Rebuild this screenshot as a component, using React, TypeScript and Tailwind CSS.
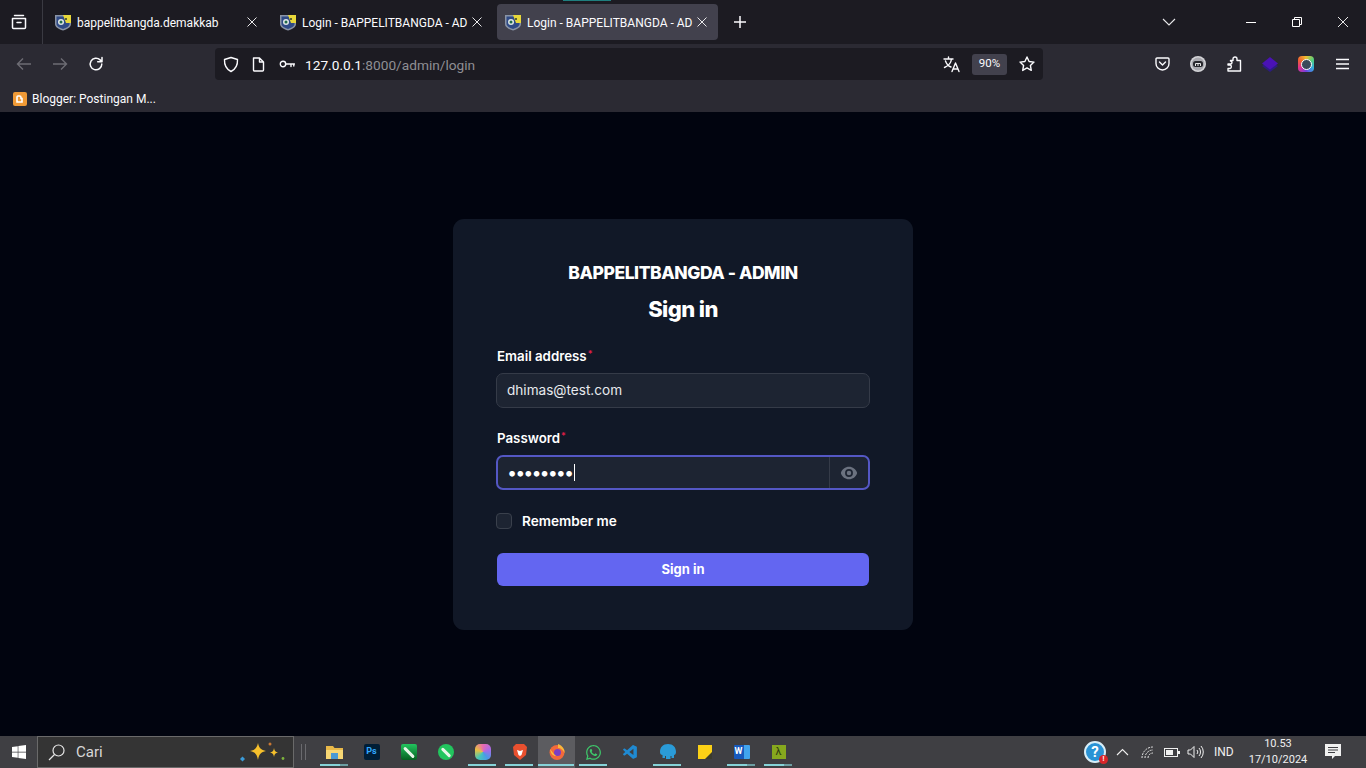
import React from "react";
import { HiEye } from "react-icons/hi2";
import { FaWindows, FaWhatsapp } from "react-icons/fa";
import { VscVscode } from "react-icons/vsc";

const uiFont = { fontFamily: 'Roboto, "Noto Sans", sans-serif' };

function Favicon() {
  return (
    <svg width="16" height="17" viewBox="0 0 16 17" className="shrink-0">
      <path d="M0 1h16v9c0 3-3 5-8 6.500C3 15 0 13 0 10z" fill="#8a94a6" />
      <path d="M1.500 2.500h13V10c0 2-3 4-6.500 5C4.500 14 1.500 12 1.500 10z" fill="#2f4a86" />
      <path d="M8 1h8v8l-5 0z" fill="#e8d83a" />
      <circle cx="6" cy="8" r="3" fill="#dfe6e6" />
      <circle cx="6" cy="8" r="1.500" fill="#1f6b4a" />
      <circle cx="11" cy="5" r="1" fill="#2d3d2a" />
    </svg>
  );
}

function Tab({ title, active }: { title: string; active?: boolean }) {
  return (
    <div className={`flex h-[36px] w-[221px] shrink-0 items-center rounded pl-[8px] pr-[10px] ${active ? "bg-[#42414d]" : ""}`}>
      <Favicon />
      <div className="ml-[6px] flex-1 whitespace-nowrap pt-[1px] text-[12px] text-[#fbfbfe]">{title}</div>
      <svg width="12" height="12" viewBox="0 0 12 12" className="shrink-0" stroke="#e8e8ea" strokeWidth="1" fill="none">
        <path d="M1.500 1.500l9 9M10.500 1.500l-9 9" />
      </svg>
    </div>
  );
}

function ToolIcon({ children }: { children: React.ReactNode }) {
  return <div className="flex h-[32px] w-[36px] shrink-0 items-center justify-center">{children}</div>;
}

const stroke = { fill: "none", stroke: "#fbfbfe", strokeWidth: 1.4, strokeLinecap: "round" as const, strokeLinejoin: "round" as const };

function TabBar() {
  return (
    <div className="relative flex h-[44px] shrink-0 items-center bg-[#1c1b22]">
      <div className="absolute left-[563px] top-0 h-[1px] w-[48px] bg-[#1f7f7f]" />
      <div className="flex h-[44px] w-[43px] shrink-0 items-center justify-center border-r border-[#3a3a42] pr-[4px]">
        <svg width="16" height="16" viewBox="0 0 16 16" {...stroke}>
          <path d="M3.500 1.500h9M1.500 4.500h13v9a1 1 0 0 1-1 1h-11a1 1 0 0 1-1-1zM6 8.500h4" strokeWidth="1.500" />
        </svg>
      </div>
      <div className="ml-[4px] flex items-center gap-[4px]">
        <Tab title="bappelitbangda.demakkab" />
        <Tab title="Login - BAPPELITBANGDA - AD" />
        <Tab title="Login - BAPPELITBANGDA - AD" active />
      </div>
      <div className="ml-[15px] flex w-[16px] items-center justify-center">
        <svg width="14" height="14" viewBox="0 0 14 14" stroke="#fbfbfe" strokeWidth="1.500" fill="none">
          <path d="M7 1v12M1 7h12" />
        </svg>
      </div>
      <div className="ml-[414px] flex w-[16px] items-center justify-center">
        <svg width="14" height="8" viewBox="0 0 14 8" stroke="#e8e8ea" strokeWidth="1.100" fill="none">
          <path d="M1 1l6 6 6-6" />
        </svg>
      </div>
      <div className="ml-[52px] flex h-full items-center">
        <div className="flex w-[46px] justify-center">
          <div className="h-[1px] w-[10px] bg-white" />
        </div>
        <div className="flex w-[46px] justify-center">
          <svg width="10" height="10" viewBox="0 0 10 10" stroke="#fff" strokeWidth="1" fill="none">
            <path d="M.500 2.500h7v7h-7zM2.500 2.500v-2h7v7h-2" />
          </svg>
        </div>
        <div className="flex w-[46px] justify-center">
          <svg width="10" height="10" viewBox="0 0 10 10" stroke="#fff" strokeWidth="0.900" fill="none">
            <path d="M0 0l10 10M10 0L0 10" />
          </svg>
        </div>
      </div>
    </div>
  );
}

function NavBar() {
  return (
    <div className="flex h-[36px] shrink-0 items-start bg-[#2b2a33] pt-[4px]">
      <div className="flex w-[215px] shrink-0 pl-[6px]">
        <ToolIcon>
          <svg width="16" height="14" viewBox="0 0 16 14" fill="none" stroke="#6d6c74" strokeWidth="1.400">
            <path d="M15 7H2M7 1.500L1.500 7 7 12.500" />
          </svg>
        </ToolIcon>
        <ToolIcon>
          <svg width="16" height="14" viewBox="0 0 16 14" fill="none" stroke="#6d6c74" strokeWidth="1.400">
            <path d="M1 7h13M9 1.500L14.500 7 9 12.500" />
          </svg>
        </ToolIcon>
        <ToolIcon>
          <svg width="16" height="16" viewBox="0 0 16 16" {...stroke} strokeWidth={1.5}>
            <path d="M13.800 8a5.800 5.800 0 1 1-1.700-4.100L14 5.800M14 1.500v4.300H9.700" />
          </svg>
        </ToolIcon>
      </div>
      <div className="flex h-[32px] w-[828px] shrink-0 items-center rounded bg-[#1c1b22]">
        <div className="flex w-[90px] shrink-0 items-center pl-[8px]">
          <div className="flex w-[28px] justify-start">
            <svg width="16" height="17" viewBox="0 0 16 17" {...stroke}>
              <path d="M8 1.500l6.500 2c.3 6-1.500 9.500-6.500 12-5-2.500-6.800-6-6.500-12z" />
            </svg>
          </div>
          <div className="flex w-[28px] justify-start pl-[1px]">
            <svg width="13" height="15" viewBox="0 0 13 15" {...stroke}>
              <path d="M1.500 1h6l4 4v8a1 1 0 0 1-1 1h-8a1 1 0 0 1-1-1zM7.500 1v4h4" />
            </svg>
          </div>
          <svg width="16" height="10" viewBox="0 0 16 10" {...stroke} className="shrink-0">
            <circle cx="4" cy="5" r="2.700" />
            <path d="M6.700 5H15.500M12 5v2.500M14.800 5v2" />
          </svg>
        </div>
        <div className="flex-1 pt-[2px] text-[13.700px] text-[#fbfbfe]">
          127.0.0.1<span className="text-[#8f8f94]">:8000/admin/login</span>
        </div>
        <svg width="18" height="17" viewBox="0 0 18 17" {...stroke} strokeWidth={1.4} className="shrink-0">
          <path d="M1 3h9M5.500 1v2M8.500 3C8 7 5 10 1.500 11.500M2.500 5c1 3 3 5 5.500 6M9 15.500L12.500 7l3.500 8.500M10.300 13h4.500" />
        </svg>
        <div className="ml-[11px] flex h-[21px] w-[35px] shrink-0 items-center justify-center rounded-[3px] bg-[#42414d] text-[11.500px] text-[#fbfbfe]">
          90%
        </div>
        <div className="ml-[12px] mr-[8px] shrink-0">
          <svg width="16" height="16" viewBox="0 0 16 16" {...stroke} className="block">
            <path d="M8 1l2.100 4.500 4.900.6-3.600 3.400.9 4.900L8 11.900l-4.300 2.500.9-4.900L1 6.100l4.900-.6z" />
          </svg>
        </div>
      </div>
      <div className="ml-[101px] flex">
        <ToolIcon>
          <svg width="15" height="14" viewBox="0 0 15 14" {...stroke}>
            <path d="M1 2a1 1 0 0 1 1-1h11a1 1 0 0 1 1 1v4.500a6.500 6.500 0 0 1-13 0zM4.500 5l3 3 3-3" />
          </svg>
        </ToolIcon>
        <ToolIcon>
          <svg width="16" height="16" viewBox="0 0 16 16">
            <circle cx="8" cy="8" r="8" fill="#d4d4d8" />
            <circle cx="8" cy="8" r="6.500" fill="#a8a8ae" />
            <rect x="3" y="5" width="10" height="6" rx="2.500" fill="#26262c" />
            <path d="M5.500 10V7.500h5V10M8 7.500V10" stroke="#e8e8e8" strokeWidth="1" fill="none" />
          </svg>
        </ToolIcon>
        <ToolIcon>
          <svg width="15" height="16" viewBox="0 0 15 16" {...stroke}>
            <path d="M1 8h2.500a1.500 1.500 0 0 0 0-3V4.500h2.500V3a2 2 0 0 1 4 0v1.500h3.500V15H1v-2.500h2a1.800 1.800 0 0 0 0-3.500H1z" />
          </svg>
        </ToolIcon>
        <ToolIcon>
          <svg width="16" height="16" viewBox="0 0 16 16">
            <path d="M0 10l8-5 8 5-8 6z" fill="#2c1c80" />
            <path d="M0 7.500l8-6.500 8 6.500-8 6z" fill="#4a12b5" />
          </svg>
        </ToolIcon>
        <ToolIcon>
          <div className="flex h-[16px] w-[16px] items-center justify-center rounded-[4px] bg-[conic-gradient(#f0c030,#50d080,#30b0e0,#7040e0,#e03090,#f06030,#f0c030)]">
            <div className="flex h-[11px] w-[11px] items-center justify-center rounded-full border border-white bg-[#3a4a5a]" />
          </div>
        </ToolIcon>
        <ToolIcon>
          <svg width="13" height="12" viewBox="0 0 13 12" stroke="#fbfbfe" strokeWidth="1.300" fill="none">
            <path d="M0 1.500h13M0 6h13M0 10.500h13" />
          </svg>
        </ToolIcon>
      </div>
    </div>
  );
}

function BookmarkBar() {
  return (
    <div className="flex h-[32px] shrink-0 items-center bg-[#2b2a33] pl-[13px] pt-[5px]">
      <div className="flex h-[14px] w-[14px] items-center justify-center rounded-[2px] bg-[#f09a36]">
        <svg width="8" height="8" viewBox="0 0 8 8" fill="none" stroke="#fff" strokeWidth="1.600">
          <path d="M1 7V2a1 1 0 0 1 1-1h1.500a1.500 1.500 0 0 1 1.500 1.500V3.500h1V7z" />
        </svg>
      </div>
      <div className="ml-[5px] text-[12px] text-[#fbfbfe]">Blogger: Postingan M...</div>
    </div>
  );
}

const cardFont = { fontFamily: 'Inter, "Noto Sans", sans-serif' };

function LoginCard() {
  return (
    <div className="flex h-[411px] w-[460px] flex-col rounded-[11px] bg-[#111827] px-[43px] pt-[43px] text-white" style={cardFont}>
      <div className="text-center text-[17.500px] font-extrabold leading-[22px] tracking-[-0.45px]">BAPPELITBANGDA - ADMIN</div>
      <div className="mt-[9px] text-center text-[22px] font-extrabold leading-[32px] tracking-[-0.6px]">Sign in</div>

      <div className="mt-[22px] pl-[1px] text-[13.300px] font-semibold leading-[18px]">
        Email address<sup className="ml-[1px] text-[9px] font-semibold text-[#e11d48]">*</sup>
      </div>
      <div className="mt-[8px] flex h-[35px] items-center rounded-[7px] border border-[#353b48] bg-[#1d2432] px-[10px] text-[13.600px] text-[#e8eaee]">
        dhimas@test.com
      </div>

      <div className="mt-[21px] pl-[1px] text-[13.300px] font-semibold leading-[18px]">
        Password<sup className="ml-[1px] text-[9px] font-semibold text-[#e11d48]">*</sup>
      </div>
      <div className="mt-[8px] flex h-[35px] items-center rounded-[7px] border-2 border-[#5457c4] bg-[#1d2432]">
        <div className="flex flex-1 items-center pl-[9px] text-white">
          <span className="text-[18px] leading-[17px] tracking-[-2px]">••••••••</span>
          <span className="ml-[2px] h-[17px] w-[1px] bg-white" />
        </div>
        <div className="flex h-full w-[39px] items-center justify-center border-l border-[#353b48]">
          <HiEye className="h-[18px] w-[18px] text-[#6b7280]" />
        </div>
      </div>

      <div className="mt-[21px] flex items-center">
        <div className="h-[16px] w-[16px] rounded-[4px] border border-[#3a404c] bg-[#1d2432]" />
        <div className="ml-[10px] text-[13.600px] font-semibold">Remember me</div>
      </div>

      <div className="mx-[1px] mt-[22px] flex h-[33px] items-center justify-center rounded-[6px] bg-[#6366f1] text-[13px] font-bold">
        Sign in
      </div>
    </div>
  );
}

function AppIcon({ children, active, bar }: { children: React.ReactNode; active?: boolean; bar?: "full" | "split" | "none" }) {
  return (
    <div className={`relative flex h-[32px] w-[37px] shrink-0 items-center justify-center ${active ? "bg-[#5c5c60]" : ""}`}>
      {children}
      {bar !== "none" && (
        <div className={`absolute bottom-[2px] flex h-[2px] ${active ? "left-0 w-[36px]" : "left-[4px] w-[28px]"}`}>
          <div className={`h-full bg-[#86d3d8] ${bar === "split" ? "w-[20px]" : "w-full"}`} />
          {bar === "split" && <div className="h-full w-[8px] bg-[#6c9ea2]" />}
        </div>
      )}
    </div>
  );
}

function Taskbar() {
  return (
    <div className="flex h-[32px] shrink-0 items-center bg-[#3f3f43]" style={uiFont}>
      <div className="flex h-full w-[37px] shrink-0 items-center justify-center">
        <FaWindows className="h-[16px] w-[16px] text-white" />
      </div>
      <div className="flex h-[32px] w-[257px] shrink-0 items-center border border-[#6a6a6a] bg-[#343434] pl-[10px]">
        <svg width="17" height="17" viewBox="0 0 17 17" fill="none" stroke="#e6e6e6" strokeWidth="1.200" className="shrink-0">
          <circle cx="10.500" cy="6.500" r="5.500" />
          <path d="M6.500 10.500L1 16" />
        </svg>
        <div className="ml-[11px] flex-1 text-[15px] text-[#d8d8d8]">Cari</div>
        <svg width="48" height="24" viewBox="0 0 48 24" className="mr-[7px] shrink-0">
          <path d="M2 19l2.500-2.500L7 19l-2.500 2.500z" fill="#3b9bd8" />
          <path d="M20 3c1 5 3 7 8 8-5 1-7 3-8 9-1-6-3-8-8-9 5-1 7-3 8-8z" fill="#f6c02c" />
          <path d="M36 8c.5 3 1.500 4 4 4.500-2.500.5-3.500 1.500-4 4.500-.5-3-1.500-4-4-4.500 2.500-.5 3.500-1.500 4-4.500z" fill="#f6c02c" />
          <circle cx="32" cy="4" r="1.500" fill="#c87834" />
          <circle cx="45" cy="18.500" r="1.400" fill="#7db33c" />
        </svg>
      </div>
      <div className="ml-[7px] flex h-[16px] w-[5px] shrink-0 justify-between">
        <div className="w-[1px] bg-[#6a6a6e]" />
        <div className="w-[1px] bg-[#6a6a6e]" />
      </div>
      <div className="ml-[10px] flex">
        <AppIcon bar="split">
          <svg width="17" height="15" viewBox="0 0 17 15">
            <path d="M0 1h7l1.500 2H17v11H0z" fill="#e9b949" />
            <rect x="0" y="5" width="17" height="9" fill="#f7d774" />
            <rect x="5" y="8" width="7" height="6" fill="#4a9ad4" />
          </svg>
        </AppIcon>
        <AppIcon bar="none">
          <div className="flex h-[16px] w-[16px] items-center justify-center rounded-[2px] bg-[#001e36] text-[9px] font-bold text-[#31a8ff]">Ps</div>
        </AppIcon>
        <AppIcon bar="none">
          <div className="flex h-[16px] w-[16px] items-center justify-center rounded-[2px] bg-[linear-gradient(#22c55e,#065f20)]">
            <div className="h-[3px] w-[14px] rotate-45 rounded-full bg-[#e8f5e8]" />
          </div>
        </AppIcon>
        <AppIcon bar="none">
          <div className="flex h-[16px] w-[16px] items-center justify-center rounded-full bg-[#22c55e]">
            <div className="h-[3px] w-[12px] rotate-45 rounded-full bg-[#e8f5e8]" />
          </div>
        </AppIcon>
        <AppIcon bar="full">
          <div className="h-[16px] w-[16px] rounded-[5px] bg-[conic-gradient(#e86ab0,#a86be8,#4a9ae8,#46c8b8,#e8c040,#e86ab0)]" />
        </AppIcon>
        <AppIcon bar="full">
          <svg width="14" height="16" viewBox="0 0 14 16">
            <path d="M3 0h8l3 3-1 8-6 5-6-5-1-8z" fill="#e9502f" />
            <path d="M4 6l3 1 3-1-1.500 5L7 12l-1.500-1z" fill="#fff" />
          </svg>
        </AppIcon>
        <AppIcon active bar="full">
          <svg width="16" height="16" viewBox="0 0 16 16">
            <circle cx="8" cy="8.500" r="7.500" fill="#f2693b" />
            <path d="M9 0c5 2 7 6 6.500 9C14 6 12 4 9 4z" fill="#f7b73a" />
            <circle cx="8.500" cy="8.500" r="3.500" fill="#7a3fc4" />
            <path d="M1 5c2 2 3 5 6 7-3 0-5-2-6-7z" fill="#f9c23c" />
          </svg>
        </AppIcon>
        <AppIcon bar="full">
          <FaWhatsapp className="h-[17px] w-[17px] text-[#3ec66a]" />
        </AppIcon>
        <AppIcon bar="none">
          <VscVscode className="h-[17px] w-[17px] text-[#1f8ad2]" />
        </AppIcon>
        <AppIcon bar="full">
          <svg width="16" height="16" viewBox="0 0 16 16">
            <path d="M8 0c5 0 8 3 8 8 0 2-1 3-2 3v3h-2.500v-2h-1v3H6v-3H5v2H2.500v-3C1 11 0 10 0 8c0-5 3-8 8-8z" fill="#2a9bd8" />
          </svg>
        </AppIcon>
        <AppIcon bar="none">
          <svg width="14" height="14" viewBox="0 0 14 14">
            <rect width="14" height="14" fill="#fcd116" />
            <path d="M14 7v7H7z" fill="#3c3c2c" />
          </svg>
        </AppIcon>
        <AppIcon bar="split">
          <div className="flex">
            <div className="flex h-[14px] w-[10px] items-center justify-center rounded-l-[1px] bg-[#185abd] text-[9px] font-bold text-white">W</div>
            <div className="h-[14px] w-[6px] rounded-r-[1px] bg-[#41a5ee]" />
          </div>
        </AppIcon>
        <AppIcon bar="split">
          <div className="flex h-[14px] w-[14px] items-center justify-center bg-[#86a81e] text-[11px] text-[#2d3a10]">λ</div>
        </AppIcon>
      </div>

      <div className="relative ml-[287px] flex h-[22px] w-[22px] shrink-0 items-center justify-center rounded-full border-2 border-[#d8eef8] bg-[#2a93d5] text-[15px] font-bold leading-none text-white">
        ?
        <div className="absolute bottom-[-3px] right-[-4px] flex h-[9px] w-[9px] items-center justify-center rounded-full bg-[#d9252a] text-[7px] leading-none text-white">!</div>
      </div>
      <svg width="13" height="8" viewBox="0 0 13 8" fill="none" stroke="#f0f0f0" strokeWidth="1.100" className="ml-[10px] shrink-0">
        <path d="M1 7l5.500-5.500L12 7" />
      </svg>
      <svg width="14" height="13" viewBox="0 0 14 13" fill="none" stroke="#e8e8e8" strokeWidth="1" className="ml-[12px] shrink-0">
        <path d="M1 12a11 11 0 0 1 11-11M4 12a8 8 0 0 1 8-8M7 12a5 5 0 0 1 5-5" strokeDasharray="2 1" />
      </svg>
      <svg width="16" height="9" viewBox="0 0 16 9" className="ml-[9px] shrink-0">
        <rect x=".500" y=".500" width="13" height="8" fill="none" stroke="#f0f0f0" />
        <rect x="2" y="2" width="7" height="5" fill="#f0f0f0" />
        <rect x="14" y="3" width="2" height="3" fill="#f0f0f0" />
      </svg>
      <svg width="17" height="14" viewBox="0 0 17 14" fill="none" stroke="#f0f0f0" strokeWidth="1" className="ml-[7px] shrink-0">
        <path d="M1 5h2.500L7 1.500v11L3.500 9H1zM10 5a3 3 0 0 1 0 4M12 3a6 6 0 0 1 0 8M14 1a9 9 0 0 1 0 12" />
      </svg>
      <div className="ml-[10px] w-[21px] text-[12px] text-[#f0f0f0]">IND</div>
      <div className="ml-[9px] flex w-[68px] flex-col items-center text-[11px] leading-[16px] text-[#f0f0f0]">
        <div>10.53</div>
        <div>17/10/2024</div>
      </div>
      <svg width="16" height="16" viewBox="0 0 16 16" className="ml-[13px] shrink-0">
        <path d="M0 0h16v12h-6l-3 3v-3H0z" fill="#f0f0f0" />
        <path d="M3 3.500h10M3 6h10M3 8.500h7" stroke="#3f3f43" strokeWidth="1" />
      </svg>
    </div>
  );
}

export default function App() {
  return (
    <div className="flex h-[768px] w-[1366px] flex-col overflow-hidden bg-[#01040f]" style={uiFont}>
      <TabBar />
      <NavBar />
      <BookmarkBar />
      <div className="flex flex-1 justify-center pt-[107px]">
        <LoginCard />
      </div>
      <Taskbar />
    </div>
  );
}
